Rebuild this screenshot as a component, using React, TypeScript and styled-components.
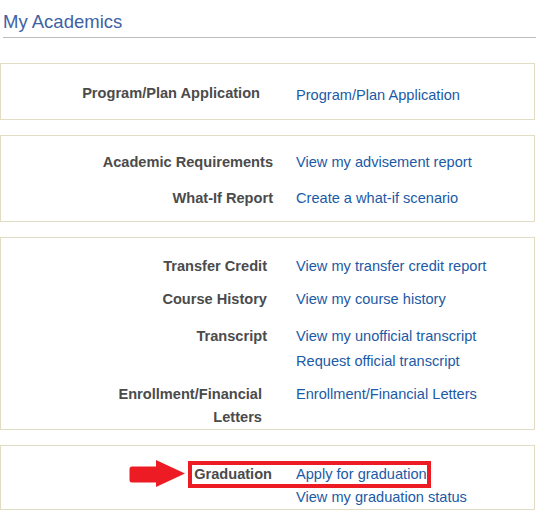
import React from "react";
import styled, { createGlobalStyle } from "styled-components";

const GlobalStyle = createGlobalStyle`
  html, body { margin: 0; padding: 0; background: #ffffff; }
  body { font-family: "Liberation Sans", Arial, sans-serif; }
`;

const Page = styled.div`
  width: 536px;
  display: flex;
  flex-direction: column;
`;

const Header = styled.h1`
  margin: 0 0 25px 3px;
  height: 38px;
  box-sizing: border-box;
  padding-top: 11px;
  font-size: 18.5px;
  line-height: 22px;
  font-weight: normal;
  color: #3f62a4;
  border-bottom: 1px solid #bcbcbc;
`;

const Boxes = styled.div`
  display: flex;
  flex-direction: column;
  gap: 15px;
`;

const Box = styled.section<{ $pt: number; $pb: number }>`
  width: 535px;
  box-sizing: border-box;
  border: 1px solid #e2dcc5;
  padding: ${(p) => p.$pt}px 0 ${(p) => p.$pb}px 0;
  display: flex;
  flex-direction: column;
`;

const Row = styled.div<{ $mt?: number }>`
  position: relative;
  display: grid;
  grid-template-columns: 295px 1fr;
  margin-top: ${(p) => p.$mt ?? 0}px;
  font-size: 14.6px;
  line-height: 23px;
`;

const Label = styled.div<{ $pr: number; $shift?: number; $max?: number }>`
  justify-self: end;
  text-align: right;
  margin-right: ${(p) => p.$pr}px;
  margin-top: ${(p) => -(p.$shift ?? 0)}px;
  max-width: ${(p) => (p.$max ? `${p.$max}px` : "none")};
  font-weight: bold;
  color: #4b4b4b;
`;

const Links = styled.div<{ $gap?: number }>`
  display: flex;
  flex-direction: column;
  gap: ${(p) => p.$gap ?? 0}px;
`;

const Link = styled.a`
  color: #1b5aa6;
  text-decoration: none;
  cursor: pointer;
`;

const Highlight = styled.div`
  position: absolute;
  left: 187px;
  top: -2px;
  width: 243px;
  height: 27px;
  box-sizing: border-box;
  border: 4px solid #ed1c24;
  pointer-events: none;
`;

const Arrow = styled.svg`
  position: absolute;
  left: 127px;
  top: -4px;
  width: 58px;
  height: 29px;
`;

type Item = {
  label: string;
  links: string[];
  pr: number;
  mt?: number;
  shift?: number;
  max?: number;
  gap?: number;
  mark?: boolean;
};

type Group = { pt: number; pb: number; items: Item[] };

const groups: Group[] = [
  {
    pt: 20,
    pb: 12,
    items: [{ label: "Program/Plan Application", links: ["Program/Plan Application"], pr: 36, shift: 2 }],
  },
  {
    pt: 15,
    pb: 11,
    items: [
      { label: "Academic Requirements", links: ["View my advisement report"], pr: 23 },
      { label: "What-If Report", links: ["Create a what-if scenario"], pr: 23, mt: 13 },
    ],
  },
  {
    pt: 17,
    pb: 0,
    items: [
      { label: "Transfer Credit", links: ["View my transfer credit report"], pr: 29 },
      { label: "Course History", links: ["View my course history"], pr: 29, mt: 10 },
      {
        label: "Transcript",
        links: ["View my unofficial transcript", "Request official transcript"],
        pr: 29,
        mt: 14,
        gap: 2,
      },
      {
        label: "Enrollment/Financial Letters",
        links: ["Enrollment/Financial Letters"],
        pr: 34,
        mt: 10,
        max: 150,
      },
    ],
  },
  {
    pt: 17,
    pb: 0,
    items: [
      {
        label: "Graduation",
        links: ["Apply for graduation", "View my graduation status"],
        pr: 24,
        mark: true,
      },
    ],
  },
];

export default function App() {
  return (
    <Page>
      <GlobalStyle />
      <Header>My Academics</Header>
      <Boxes>
        {groups.map((g, gi) => (
          <Box key={gi} $pt={g.pt} $pb={g.pb}>
            {g.items.map((it) => (
              <Row key={it.label} $mt={it.mt}>
                <Label $pr={it.pr} $shift={it.shift} $max={it.max}>
                  {it.label}
                </Label>
                <Links $gap={it.gap}>
                  {it.links.map((l) => (
                    <Link key={l}>{l}</Link>
                  ))}
                </Links>
                {it.mark && (
                  <>
                    <Arrow viewBox="0 0 58 29" aria-hidden="true">
                      <path
                        d="M4 7.5 H28 V1 L57 14.5 L28 28 V23.5 H4 Q1.5 23.5 1.5 21 V10 Q1.5 7.5 4 7.5 Z"
                        fill="#ed1c24"
                      />
                    </Arrow>
                    <Highlight />
                  </>
                )}
              </Row>
            ))}
          </Box>
        ))}
      </Boxes>
    </Page>
  );
}
